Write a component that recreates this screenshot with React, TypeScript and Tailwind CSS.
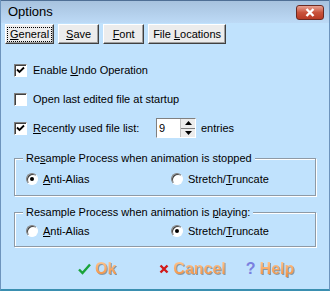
import React from "react";

const font = { fontFamily: '"Liberation Sans", Arial, sans-serif' };

function Check({ checked }: { checked: boolean }) {
  return (
    <span className="inline-flex h-[13px] w-[13px] shrink-0 items-center justify-center border border-t-[#808080] border-l-[#808080] border-b-white border-r-white bg-white shadow-[inset_1px_1px_0_#404040]">
      {checked && (
        <svg width="9" height="9" viewBox="0 0 9 9">
          <path d="M1 3.5 L3.5 6 L8 1.5" stroke="#000" strokeWidth="1.8" fill="none" />
        </svg>
      )}
    </span>
  );
}

function Radio({ checked }: { checked: boolean }) {
  return (
    <span className="inline-flex h-[12px] w-[12px] shrink-0 items-center justify-center rounded-full border border-t-[#808080] border-l-[#808080] border-b-white border-r-white bg-white shadow-[inset_1px_1px_0_#404040]">
      {checked && <span className="h-[4px] w-[4px] rounded-full bg-black" />}
    </span>
  );
}

function U({ children }: { children: React.ReactNode }) {
  return <span className="underline underline-offset-[1px]">{children}</span>;
}

function TabBtn({ children, focus }: { children: React.ReactNode; focus?: boolean }) {
  return (
    <div className="flex h-[20px] min-w-[41px] items-center justify-center border border-t-white border-l-white border-b-[#404040] border-r-[#404040] bg-[#ececec] px-[2px] shadow-[inset_-1px_-1px_0_#a0a0a0]">
      <span className={`px-[2px] leading-[13px] ${focus ? "outline outline-1 outline-dotted outline-black" : ""}`}>
        {children}
      </span>
    </div>
  );
}

function Group({
  title,
  first,
  second,
  tall,
}: {
  title: React.ReactNode;
  first: boolean;
  second: boolean;
  tall?: boolean;
}) {
  return (
    <div
      className={`relative mx-[13px] border border-[#8e9aa6] shadow-[1px_1px_0_white,inset_1px_1px_0_white] ${
        tall ? "h-[38px]" : "h-[35px]"
      }`}
    >
      <span className="absolute -top-[8px] left-[8px] bg-[#c0e2fd] px-[3px] leading-[14px]">{title}</span>
      <div className={`flex h-[14px] items-center pl-[11px] ${tall ? "mt-[13px]" : "mt-[11px]"}`}>
        <div className="flex w-[145px] items-center gap-[5px]">
          <Radio checked={first} />
          <span>
            <U>A</U>nti-Alias
          </span>
        </div>
        <div className="flex items-center gap-[5px]">
          <Radio checked={second} />
          <span>
            Stretch/<U>T</U>runcate
          </span>
        </div>
      </div>
    </div>
  );
}

function Fancy({ icon, label }: { icon: React.ReactNode; label: string }) {
  return (
    <div className="flex items-center gap-[4px]">
      {icon}
      <span
        className="bg-gradient-to-b from-[#ffcd9a] to-[#ee8526] bg-clip-text text-[16px] leading-[20px] font-bold text-transparent"
        style={{ filter: "drop-shadow(1px 1px 0.6px rgba(80,80,80,0.5))" }}
      >
        {label}
      </span>
    </div>
  );
}

export default function App() {
  return (
    <div
      style={font}
      className="flex h-[291px] w-[330px] flex-col overflow-hidden border-x border-b-2 border-x-[#6d94bd] border-b-[#3a8fb0] bg-[#c0e2fd] text-[11px] leading-[14px] text-black"
    >
      <div className="flex h-[23px] shrink-0 items-center justify-between border-t border-[#4f6f95] bg-gradient-to-b from-[#a7c2de] to-[#bddaf6] pl-[7px] pr-[5px]">
        <span className="text-[13px]">Options</span>
        <div className="flex h-[15px] w-[28px] items-center justify-center rounded-[3px] border border-[#6b2a22] bg-gradient-to-b from-[#e8a192] via-[#c9533c] to-[#b83a24]">
          <svg width="10" height="9" viewBox="0 0 10 9">
            <path d="M1.5 1 L8.5 8 M8.5 1 L1.5 8" stroke="#fff" strokeWidth="2.4" />
          </svg>
        </div>
      </div>

      <div className="mt-[1px] flex gap-[4px] pl-[4px]">
        <TabBtn focus>
          <U>G</U>eneral
        </TabBtn>
        <TabBtn>
          <U>S</U>ave
        </TabBtn>
        <TabBtn>
          <U>F</U>ont
        </TabBtn>
        <TabBtn>
          File <U>L</U>ocations
        </TabBtn>
      </div>

      <div className="mt-[18px] flex h-[16px] items-center gap-[6px] pl-[13px]">
        <Check checked />
        <span>
          Enable <U>U</U>ndo Operation
        </span>
      </div>
      <div className="mt-[13px] flex h-[16px] items-center gap-[6px] pl-[13px]">
        <Check checked={false} />
        <span>Open last edited file at startup</span>
      </div>
      <div className="mt-[11px] flex h-[20px] items-center pl-[13px]">
        <Check checked />
        <span className="ml-[6px] w-[123px]">
          <U>R</U>ecently used file list:
        </span>
        <div className="flex h-[20px] w-[40px] items-stretch border border-t-[#808080] border-l-[#808080] border-b-white border-r-white bg-white">
          <span className="flex-1 pl-[2px] leading-[18px]">9</span>
          <div className="flex w-[15px] flex-col border-l border-[#c0c0c0] bg-[#ececec]">
            <div className="flex flex-1 items-center justify-center border-b border-[#808080]">
              <svg width="7" height="4" viewBox="0 0 7 4">
                <path d="M0 4 L3.5 0 L7 4Z" fill="#000" />
              </svg>
            </div>
            <div className="flex flex-1 items-center justify-center">
              <svg width="7" height="4" viewBox="0 0 7 4">
                <path d="M0 0 L3.5 4 L7 0Z" fill="#000" />
              </svg>
            </div>
          </div>
        </div>
        <span className="ml-[5px]">entries</span>
      </div>

      <div className="mt-[20px]">
        <Group
          title={
            <>
              Re<U>s</U>ample Process when animation is stopped
            </>
          }
          first
          second={false}
          tall
        />
      </div>
      <div className="mt-[16px]">
        <Group
          title={
            <>
              Resample Process when animation is <U>p</U>laying:
            </>
          }
          first={false}
          second
        />
      </div>

      <div className="mt-[12px] flex items-center pl-[77px]">
        <Fancy
          icon={
            <svg width="13" height="12" viewBox="0 0 13 12">
              <path d="M1 6.5 L4.5 10 L12 1.5" stroke="#1aa33a" strokeWidth="2.4" fill="none" />
            </svg>
          }
          label="Ok"
        />
        <div className="ml-[43px]">
          <Fancy
            icon={
              <svg width="10" height="10" viewBox="0 0 10 10">
                <path d="M1.5 1.5 L8.5 8.5 M8.5 1.5 L1.5 8.5" stroke="#d11a1a" strokeWidth="2.4" />
              </svg>
            }
            label="Cancel"
          />
        </div>
        <div className="ml-[20px]">
          <Fancy
            icon={<span className="text-[16px] font-bold leading-none text-[#7b7fe0]">?</span>}
            label="Help"
          />
        </div>
      </div>
    </div>
  );
}
